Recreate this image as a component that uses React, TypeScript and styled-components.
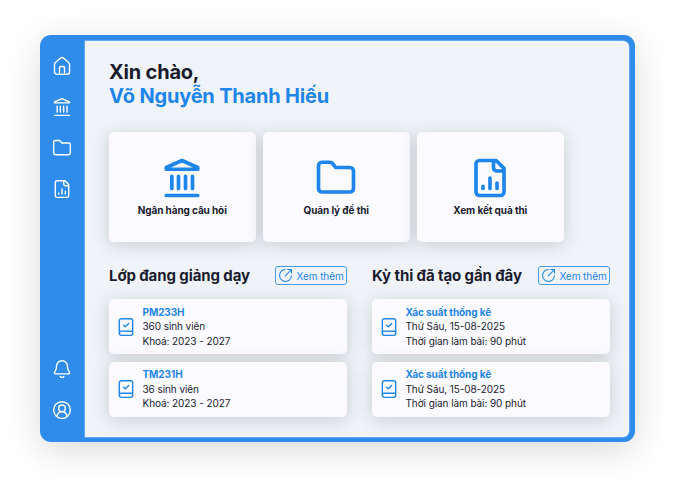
import React from "react";
import styled, { createGlobalStyle, css } from "styled-components";

const GlobalStyle = createGlobalStyle`
  * { box-sizing: border-box; }
  body {
    margin: 0;
    background: #fff;
    font-family: Inter, "Liberation Sans", sans-serif;
    color: #1a1c2e;
  }
  h1, h2, p { margin: 0; }
`;

const Page = styled.div`
  height: 487px;
  padding: 35px 40px 45px;
  overflow: hidden;
`;

const Frame = styled.div`
  display: flex;
  width: 595px;
  height: 407px;
  padding: 5.5px 6px 5.5px 0;
  border-radius: 11px;
  background: #2f8cea;
  box-shadow: 0 8px 36px rgba(0, 0, 0, 0.15);
`;

const Sidebar = styled.nav`
  display: flex;
  flex-direction: column;
  justify-content: space-between;
  align-items: center;
  width: 44.5px;
  padding: 15.5px 0 17px;
  color: #fff;
`;

const NavGroup = styled.div`
  display: flex;
  flex-direction: column;
  gap: 21px;
`;

const Main = styled.main`
  flex: 1;
  min-width: 0;
  padding: 19.5px 18px 0 24.5px;
  border-radius: 0 6px 6px 0;
  background: #f0f4f9;
  box-shadow: 0 0 0 0.5px rgba(255, 255, 255, 0.5);
  overflow: hidden;
`;

const Greeting = styled.h1<{ $accent?: boolean }>`
  font-size: 20px;
  line-height: 24px;
  font-weight: 650;
  letter-spacing: -0.2px;
  white-space: nowrap;
  color: ${(p) => (p.$accent ? "#1e85ea" : "#1a1c2e")};
`;

const surface = css`
  border-radius: 5px;
  background: #fbfaff;
  box-shadow: 0 3px 17px rgba(60, 75, 70, 0.22);
`;

const Tiles = styled.section`
  display: flex;
  gap: 7.5px;
  margin-top: 24px;
`;

const Tile = styled.div`
  ${surface}
  display: flex;
  flex-direction: column;
  align-items: center;
  width: 146.5px;
  height: 110px;
  padding-top: 25px;
  color: #1e85ea;
`;

const TileLabel = styled.p`
  margin-top: 4px;
  font-size: 10px;
  line-height: 14px;
  font-weight: 650;
  letter-spacing: -0.1px;
  color: #1a1c2e;
`;

const Columns = styled.section`
  display: grid;
  grid-template-columns: 238.4px 238.4px;
  gap: 24.6px;
  margin-top: 24px;
`;

const ColumnHead = styled.div`
  display: flex;
  align-items: center;
  justify-content: space-between;
  height: 19px;
  margin-bottom: 14px;
`;

const ColumnTitle = styled.h2`
  font-size: 15px;
  line-height: 19px;
  font-weight: 650;
  letter-spacing: -0.1px;
  white-space: nowrap;
`;

const MoreButton = styled.button`
  display: flex;
  align-items: center;
  gap: 3px;
  width: 72.5px;
  height: 19px;
  padding: 0 0 0 2.5px;
  border: 1px solid #4a9bee;
  border-radius: 3px;
  background: transparent;
  font: 400 10px/14px Inter, sans-serif;
  letter-spacing: -0.05px;
  white-space: nowrap;
  color: #1e85ea;
`;

const List = styled.div`
  display: flex;
  flex-direction: column;
  gap: 7.5px;
`;

const ListCard = styled.article`
  ${surface}
  display: flex;
  align-items: center;
  gap: 6.5px;
  height: 55px;
  padding-left: 7px;
`;

const IconSlot = styled.span`
  display: flex;
  color: #1e85ea;
`;

const Line = styled.p<{ $title?: boolean }>`
  font-size: 10px;
  line-height: 14.4px;
  white-space: nowrap;
  font-weight: ${(p) => (p.$title ? 650 : 400)};
  letter-spacing: -0.08px;
  color: ${(p) => (p.$title ? "#1e85ea" : "#1a1c2e")};
`;

const Svg = styled.svg`
  display: block;
  flex: none;
  fill: none;
  stroke: currentColor;
  stroke-linecap: round;
  stroke-linejoin: round;
`;

const icons = {
  home: "M3 10.3c0-1 .4-1.9 1.1-2.5l5.8-5a3.2 3.2 0 0 1 4.2 0l5.8 5c.7.6 1.1 1.5 1.1 2.5V19a3 3 0 0 1-3 3H6a3 3 0 0 1-3-3zM9 22v-8a1.5 1.5 0 0 1 1.5-1.5h3A1.5 1.5 0 0 1 15 14v8",
  bank: "M12 2 21 6v1H3V6zM6.2 11v7M10 11v7M14 11v7M18 11v7M3 22h18",
  folder:
    "M2 5a2 2 0 0 1 2-2h4.5a2 2 0 0 1 1.6.8L11.8 6H20a2 2 0 0 1 2 2v10a2 2 0 0 1-2 2H4a2 2 0 0 1-2-2z",
  report:
    "M15.5 2H6a2 2 0 0 0-2 2v16a2 2 0 0 0 2 2h12a2 2 0 0 0 2-2V6.5zM14 2v4a2 2 0 0 0 2 2h4M8 16.8v1.2M12 12v6M16 14.9v3.1",
  bell: "M12 2a6.5 6.5 0 0 0-6.5 6.5c0 4.5-1.2 5.8-2.3 7.3-.6.9-.1 2 .9 2h15.8c1 0 1.5-1.1.9-2-1.1-1.5-2.3-2.8-2.3-7.3A6.5 6.5 0 0 0 12 2M9.8 21.2c1.3 1 3.1 1 4.4 0",
  user: "M22 12a10 10 0 1 1-20 0 10 10 0 0 1 20 0M16 10a4 4 0 1 1-8 0 4 4 0 0 1 8 0M6 20c.3-3.5 2.5-6 6-6s5.7 2.5 6 6",
  book: "M4 19.5V4.5A2.5 2.5 0 0 1 6.5 2h11A2.5 2.5 0 0 1 20 4.5v15a2.5 2.5 0 0 1-2.5 2.5h-11A2.5 2.5 0 0 1 4 19.5 2.3 2.3 0 0 1 6.3 17H20M9 9.8l2.2 2 4-4",
  share: "M11.5 2.5A9.5 9.5 0 1 0 21.5 12.5M11.5 12.5l10-10M15.5 2.5h6v6",
};

type IconName = keyof typeof icons;

function Icon({ name, size = 20, weight = 1.7 }: { name: IconName; size?: number; weight?: number }) {
  return (
    <Svg width={size} height={size} viewBox="0 0 24 24" strokeWidth={weight}>
      <path d={icons[name]} />
    </Svg>
  );
}

const tiles: { icon: IconName; label: string }[] = [
  { icon: "bank", label: "Ngân hàng câu hỏi" },
  { icon: "folder", label: "Quản lý đề thi" },
  { icon: "report", label: "Xem kết quả thi" },
];

const columns = [
  {
    title: "Lớp đang giảng dạy",
    items: [
      ["PM233H", "360 sinh viên", "Khoá: 2023 - 2027"],
      ["TM231H", "36 sinh viên", "Khoá: 2023 - 2027"],
    ],
  },
  {
    title: "Kỳ thi đã tạo gần đây",
    items: [
      ["Xác suất thống kê", "Thứ Sáu, 15-08-2025", "Thời gian làm bài: 90 phút"],
      ["Xác suất thống kê", "Thứ Sáu, 15-08-2025", "Thời gian làm bài: 90 phút"],
    ],
  },
];

export default function App() {
  return (
    <Page>
      <GlobalStyle />
      <Frame>
        <Sidebar>
          <NavGroup>
            <Icon name="home" />
            <Icon name="bank" />
            <Icon name="folder" />
            <Icon name="report" />
          </NavGroup>
          <NavGroup>
            <Icon name="bell" />
            <Icon name="user" />
          </NavGroup>
        </Sidebar>
        <Main>
          <Greeting>Xin chào,</Greeting>
          <Greeting $accent>Võ Nguyễn Thanh Hiếu</Greeting>
          <Tiles>
            {tiles.map((t) => (
              <Tile key={t.label}>
                <Icon name={t.icon} size={42} weight={2.1} />
                <TileLabel>{t.label}</TileLabel>
              </Tile>
            ))}
          </Tiles>
          <Columns>
            {columns.map((c) => (
              <div key={c.title}>
                <ColumnHead>
                  <ColumnTitle>{c.title}</ColumnTitle>
                  <MoreButton>
                    <Icon name="share" size={15} />
                    Xem thêm
                  </MoreButton>
                </ColumnHead>
                <List>
                  {c.items.map(([title, a, b], i) => (
                    <ListCard key={i}>
                      <IconSlot>
                        <Icon name="book" />
                      </IconSlot>
                      <div>
                        <Line $title>{title}</Line>
                        <Line>{a}</Line>
                        <Line>{b}</Line>
                      </div>
                    </ListCard>
                  ))}
                </List>
              </div>
            ))}
          </Columns>
        </Main>
      </Frame>
    </Page>
  );
}
